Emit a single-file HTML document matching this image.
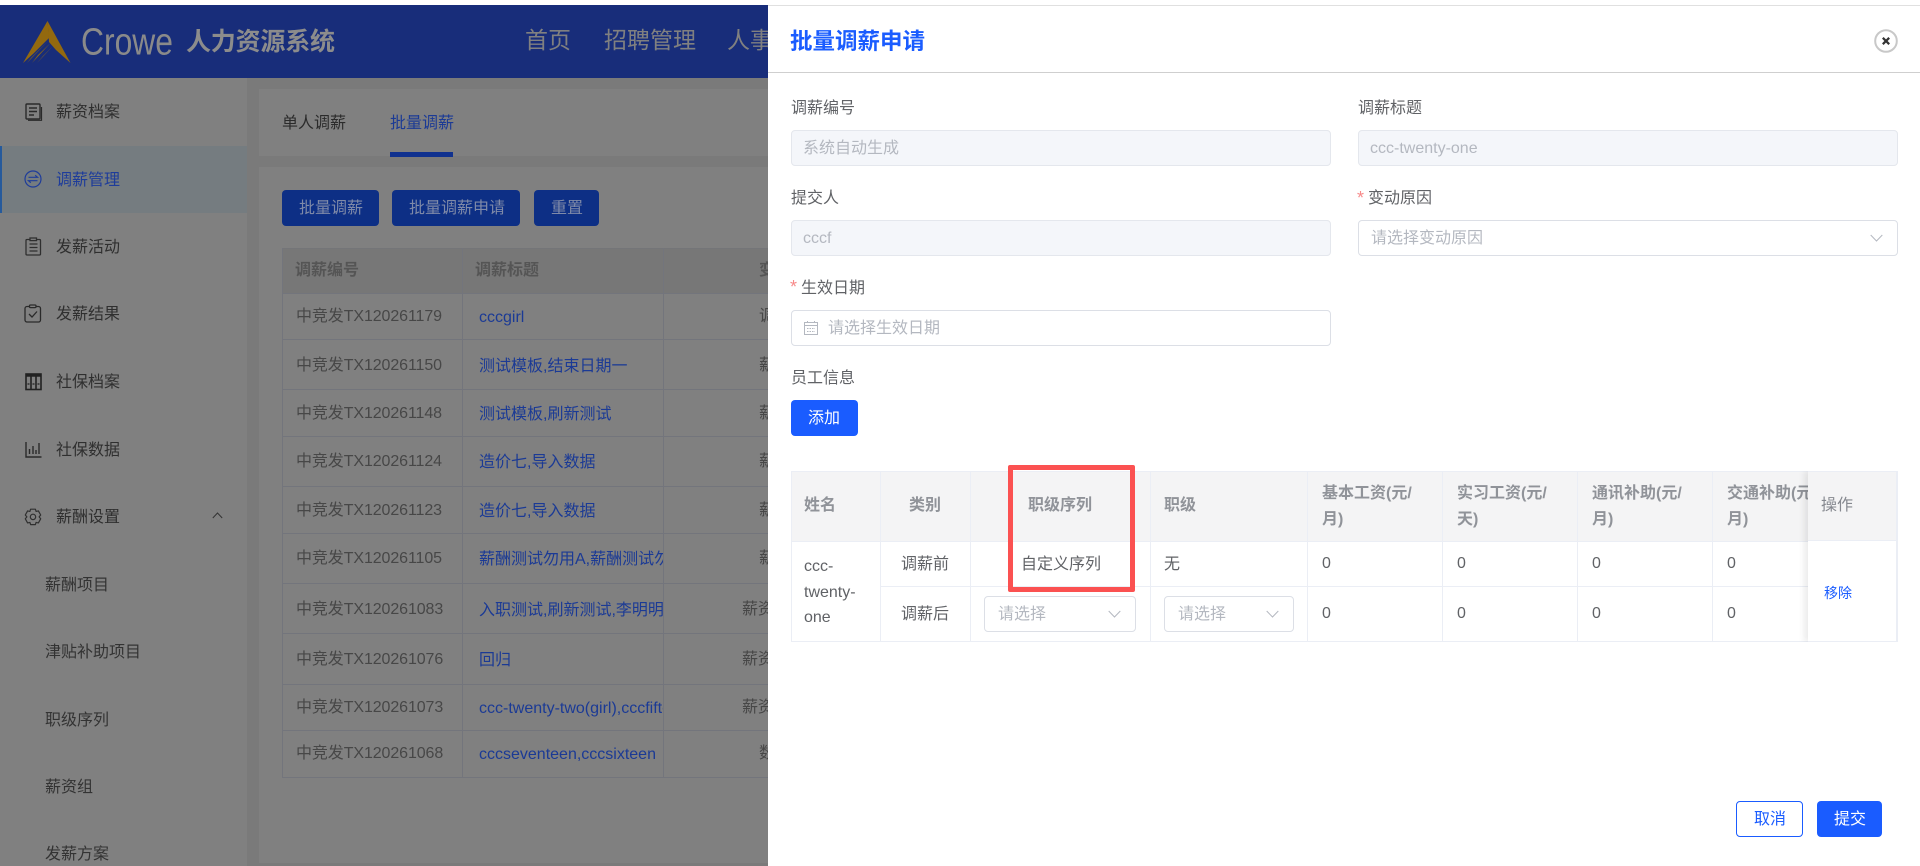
<!DOCTYPE html>
<html lang="zh">
<head>
<meta charset="utf-8">
<title>批量调薪申请</title>
<style>
html,body{margin:0;padding:0;width:1920px;height:866px;overflow:hidden;background:#fff}
body{position:relative;font-family:"Liberation Sans","Noto Sans CJK SC",sans-serif;font-size:16px}
.b{position:absolute;box-sizing:border-box}
.t{position:absolute;white-space:nowrap;line-height:24px;height:24px;margin-top:1px}
.si{color:#2f2f2f;margin-top:2px}
.sub{color:#333;margin-top:2px}
.cell{color:#474747;margin-top:2px;letter-spacing:-.1px}
.lk{color:#1b3a95;overflow:hidden;width:184px;left:479px;margin-top:2px}
.lb{color:#606266;margin-top:2px}
.ph{color:#b4b8c0}
.th{color:#909399;font-weight:bold}
.td{color:#606266}
.star{position:absolute;color:#f78989;font-size:18px;line-height:18px}
svg{position:absolute;display:block;overflow:visible}
.hl{position:absolute;height:1px}
.vl{position:absolute;width:1px}
</style>
</head>
<body>

<!-- page background -->
<div class="b" style="left:0;top:78px;width:768px;height:788px;background:#7a7a7a"></div>

<!-- top header -->
<div class="b" style="left:0;top:5px;width:768px;height:73px;background:#182d7a"></div>
<svg style="left:23px;top:21px" width="48" height="43" viewBox="0 0 48 43">
  <path d="M24.5 0 L47.5 42 L33 29 L26 21 Z" fill="#93690f"/>
  <path d="M24.5 0 L26 17 L10 33 L0 42 Z" fill="#93690f"/>
  <path d="M25 20 L8 37 L4 42 Z M27.500 22 L15 34 L9 42 Z M30 25 L20 35 L14 42 Z" fill="#93690f"/>
</svg>
<svg style="left:81px;top:20px" width="94" height="42" viewBox="0 0 94 42">
  <text x="0" y="34.5" font-family="Liberation Sans" font-size="38" fill="#8a8a8a" textLength="92" lengthAdjust="spacingAndGlyphs">Crowe</text>
</svg>
<div class="t" style="left:186px;top:26px;height:30px;line-height:30px;font-size:25px;font-weight:bold;color:#8c8c8c;letter-spacing:-.2px">人力资源系统</div>
<div class="t" style="left:525px;top:24px;height:30px;line-height:30px;font-size:23px;color:#808080">首页</div>
<div class="t" style="left:604px;top:24px;height:30px;line-height:30px;font-size:23px;color:#808080">招聘管理</div>
<div class="t" style="left:727px;top:24px;height:30px;line-height:30px;font-size:23px;color:#808080">人事</div>

<!-- sidebar -->
<div class="b" style="left:0;top:78px;width:247px;height:788px;background:#808080"></div>
<div class="b" style="left:0;top:146px;width:247px;height:67px;background:#757c80"></div>
<div class="b" style="left:0;top:146px;width:2px;height:67px;background:#265a9c"></div>

<svg style="left:25px;top:103px" width="17" height="18" viewBox="0 0 17 18" fill="none" stroke="#2a2a2a" stroke-width="1.4"><rect x="1" y="1" width="14" height="15" rx="1"/><path d="M4 5h8M4 8.5h8M4 12h5"/><path d="M3 17.3h13.5V4" stroke-width="1.2"/></svg>
<div class="t si" style="left:56px;top:99px">薪资档案</div>

<svg style="left:24px;top:170px" width="18" height="18" viewBox="0 0 18 18" fill="none" stroke="#1e3c9a" stroke-width="1.2"><circle cx="9" cy="9" r="8"/><path d="M4.5 7.3h9l-2.3-2M13.5 10.7h-9l2.3 2"/></svg>
<div class="t" style="left:56px;top:167px;margin-top:2px;color:#1e3c9a">调薪管理</div>

<svg style="left:25px;top:237px" width="17" height="19" viewBox="0 0 17 19" fill="none" stroke="#2f2f2f" stroke-width="1.3"><rect x="1" y="2.5" width="14.5" height="15.5" rx="1"/><rect x="5" y="1" width="6.5" height="2.6" fill="#808080"/><path d="M4.5 7h8M4.5 10.5h8M4.5 14h8"/></svg>
<div class="t si" style="left:56px;top:234px">发薪活动</div>

<svg style="left:24px;top:304px" width="18" height="19" viewBox="0 0 18 19" fill="none" stroke="#2a2a2a" stroke-width="1.3"><rect x="1" y="2.5" width="15.5" height="15.5" rx="2"/><rect x="5.5" y="1" width="6.5" height="2.6" rx="1" fill="#808080"/><path d="M5 10l3 3 5-5.5"/></svg>
<div class="t si" style="left:56px;top:301px">发薪结果</div>

<svg style="left:25px;top:373px" width="17" height="17" viewBox="0 0 17 17" fill="none" stroke="#222" stroke-width="1.6"><rect x="1" y="1" width="15" height="15.5"/><path d="M6 1v15.5M11 1v15.500"/><path d="M1 2.500h15" stroke-width="2.500"/><path d="M2.500 11h2M7.500 11h2M12.500 11h2" stroke-width="1.200"/></svg>
<div class="t si" style="left:56px;top:369px">社保档案</div>

<svg style="left:25px;top:441px" width="17" height="17" viewBox="0 0 17 17" fill="none" stroke="#2a2a2a" stroke-width="1.4"><path d="M1 1v15h15.5"/><path d="M4.5 13V8M8 13V5M11 13V9M14 13V2"/></svg>
<div class="t si" style="left:56px;top:437px">社保数据</div>

<svg style="left:24px;top:508px" width="18" height="18" viewBox="0 0 18 18" fill="none" stroke="#2f2f2f" stroke-width="1.2"><path d="M6.6 1.2h4.8l.7 2.2 2.3-.5 2.3 4.1-1.6 1.9 1.6 1.9-2.3 4.1-2.3-.5-.7 2.2H6.600l-.7-2.200-2.300.500L1.300 10.800l1.600-1.900L1.300 7l2.300-4.100 2.300.500z" stroke-linejoin="round"/><circle cx="9" cy="8.900" r="2.700"/></svg>
<div class="t si" style="left:56px;top:504px">薪酬设置</div>
<svg style="left:212px;top:512px" width="11" height="7" viewBox="0 0 11 7" fill="none" stroke="#333" stroke-width="1"><path d="M.8 6L5.500 1l4.700 5"/></svg>

<div class="t sub" style="left:45px;top:572px">薪酬项目</div>
<div class="t sub" style="left:45px;top:639px">津贴补助项目</div>
<div class="t sub" style="left:45px;top:707px">职级序列</div>
<div class="t sub" style="left:45px;top:774px">薪资组</div>
<div class="t sub" style="left:45px;top:841px">发薪方案</div>

<!-- tabs panel -->
<div class="b" style="left:259px;top:89px;width:509px;height:67px;background:#808080"></div>
<div class="t" style="left:282px;top:110px;margin-top:2px;color:#2b2b2b">单人调薪</div>
<div class="t" style="left:390px;top:110px;margin-top:2px;color:#1b3a95">批量调薪</div>
<div class="b" style="left:390px;top:152px;width:63px;height:5px;background:#10318f"></div>

<!-- main panel -->
<div class="b" style="left:259px;top:167px;width:509px;height:696px;background:#808080"></div>
<div class="b" style="left:282px;top:190px;width:97px;height:36px;background:#0d2f85;border-radius:4px"></div>
<div class="t" style="left:299px;top:196px;color:#7f8aa8">批量调薪</div>
<div class="b" style="left:392px;top:190px;width:128px;height:36px;background:#0d2f85;border-radius:4px"></div>
<div class="t" style="left:409px;top:196px;color:#7f8aa8">批量调薪申请</div>
<div class="b" style="left:534px;top:190px;width:65px;height:36px;background:#0d2f85;border-radius:4px"></div>
<div class="t" style="left:551px;top:196px;color:#7f8aa8">重置</div>

<!-- background table -->
<div class="b" style="left:282px;top:248px;width:486px;height:45px;background:#777"></div>
<div class="hl" style="left:282px;top:248px;width:486px;background:#747578"></div>
<div class="hl" style="left:282px;top:293px;width:486px;background:#73757c"></div>
<div class="hl" style="left:282px;top:339px;width:486px;background:#73757c"></div>
<div class="hl" style="left:282px;top:389px;width:486px;background:#73757c"></div>
<div class="hl" style="left:282px;top:436px;width:486px;background:#73757c"></div>
<div class="hl" style="left:282px;top:486px;width:486px;background:#73757c"></div>
<div class="hl" style="left:282px;top:533px;width:486px;background:#73757c"></div>
<div class="hl" style="left:282px;top:583px;width:486px;background:#73757c"></div>
<div class="hl" style="left:282px;top:633px;width:486px;background:#73757c"></div>
<div class="hl" style="left:282px;top:684px;width:486px;background:#73757c"></div>
<div class="hl" style="left:282px;top:730px;width:486px;background:#73757c"></div>
<div class="hl" style="left:282px;top:777px;width:486px;background:#73757c"></div>
<div class="vl" style="left:282px;top:248px;height:530px;background:#73757c"></div>
<div class="vl" style="left:462px;top:248px;height:530px;background:#73757c"></div>
<div class="vl" style="left:663px;top:248px;height:530px;background:#73757c"></div>

<div class="t" style="left:295px;top:257px;margin-top:2px;color:#555;font-weight:bold">调薪编号</div>
<div class="t" style="left:475px;top:257px;margin-top:2px;color:#555;font-weight:bold">调薪标题</div>
<div class="t" style="left:759px;top:257px;margin-top:2px;color:#555;font-weight:bold">变</div>

<div class="t cell" style="left:296px;top:303px">中竞发TX120261179</div>
<div class="t cell" style="left:296px;top:352px">中竞发TX120261150</div>
<div class="t cell" style="left:296px;top:400px">中竞发TX120261148</div>
<div class="t cell" style="left:296px;top:448px">中竞发TX120261124</div>
<div class="t cell" style="left:296px;top:497px">中竞发TX120261123</div>
<div class="t cell" style="left:296px;top:545px">中竞发TX120261105</div>
<div class="t cell" style="left:296px;top:596px">中竞发TX120261083</div>
<div class="t cell" style="left:296px;top:646px">中竞发TX120261076</div>
<div class="t cell" style="left:296px;top:694px">中竞发TX120261073</div>
<div class="t cell" style="left:296px;top:740px">中竞发TX120261068</div>

<div class="t lk" style="top:304px">cccgirl</div>
<div class="t lk" style="top:353px">测试模板,结束日期一</div>
<div class="t lk" style="top:401px">测试模板,刷新测试</div>
<div class="t lk" style="top:449px">造价七,导入数据</div>
<div class="t lk" style="top:498px">造价七,导入数据</div>
<div class="t lk" style="top:546px">薪酬测试勿用A,薪酬测试勿用B</div>
<div class="t lk" style="top:597px">入职测试,刷新测试,李明明,测试</div>
<div class="t lk" style="top:647px">回归</div>
<div class="t lk" style="top:695px">ccc-twenty-two(girl),cccfifteen</div>
<div class="t lk" style="top:741px">cccseventeen,cccsixteen</div>

<div class="t cell" style="left:759px;top:303px">调</div>
<div class="t cell" style="left:759px;top:352px">薪</div>
<div class="t cell" style="left:759px;top:400px">薪</div>
<div class="t cell" style="left:759px;top:448px">薪</div>
<div class="t cell" style="left:759px;top:497px">薪</div>
<div class="t cell" style="left:759px;top:545px">薪</div>
<div class="t cell" style="left:742px;top:596px">薪资</div>
<div class="t cell" style="left:742px;top:646px">薪资</div>
<div class="t cell" style="left:742px;top:694px">薪资</div>
<div class="t cell" style="left:759px;top:740px">数</div>

<!-- drawer -->
<div class="b" style="left:768px;top:5px;width:1152px;height:861px;background:#fff;border-top:1px solid #e0e0e0;overflow:hidden"></div>
<div class="hl" style="left:768px;top:72px;width:1152px;background:#cfcfcf"></div>
<div class="t" style="left:790px;top:26px;height:30px;line-height:30px;font-size:22.500px;font-weight:bold;color:#1a5cff">批量调薪申请</div>
<svg style="left:1874px;top:29px" width="24" height="24" viewBox="0 0 24 24" fill="none"><circle cx="12" cy="12" r="10.800" stroke="#c8c8c8" stroke-width="2"/><path d="M8.800 8.800l6.400 6.400M15.200 8.800l-6.400 6.400" stroke="#333" stroke-width="2.200"/></svg>

<!-- form -->
<div class="t lb" style="left:791px;top:95px">调薪编号</div>
<div class="b" style="left:791px;top:130px;width:540px;height:36px;background:#f4f6fa;border:1px solid #e4e7ed;border-radius:4px"></div>
<div class="t ph" style="left:803px;top:136px">系统自动生成</div>

<div class="t lb" style="left:1358px;top:95px">调薪标题</div>
<div class="b" style="left:1358px;top:130px;width:540px;height:36px;background:#f4f6fa;border:1px solid #e4e7ed;border-radius:4px"></div>
<div class="t ph" style="left:1370px;top:136px">ccc-twenty-one</div>

<div class="t lb" style="left:791px;top:185px">提交人</div>
<div class="b" style="left:791px;top:220px;width:540px;height:36px;background:#f4f6fa;border:1px solid #e4e7ed;border-radius:4px"></div>
<div class="t ph" style="left:803px;top:226px">cccf</div>

<div class="star" style="left:1357px;top:189px">*</div>
<div class="t lb" style="left:1368px;top:185px">变动原因</div>
<div class="b" style="left:1358px;top:220px;width:540px;height:36px;background:#fff;border:1px solid #dcdfe6;border-radius:4px"></div>
<div class="t ph" style="left:1371px;top:226px">请选择变动原因</div>
<svg style="left:1870px;top:234px" width="13" height="8" viewBox="0 0 13 8" fill="none" stroke="#b4b8c0" stroke-width="1"><path d="M.7 1l5.800 6 5.800-6"/></svg>

<div class="star" style="left:790px;top:278px">*</div>
<div class="t lb" style="left:801px;top:275px">生效日期</div>
<div class="b" style="left:791px;top:310px;width:540px;height:36px;background:#fff;border:1px solid #dcdfe6;border-radius:4px"></div>
<svg style="left:804px;top:321px" width="14" height="14" viewBox="0 0 14 14" fill="none" stroke="#b4b8c0" stroke-width="1"><rect x=".5" y="1.500" width="13" height="12"/><path d="M.5 4.500h13M3.500 0v2M10.500 0v2"/><path d="M3 7.500h8M3 10.500h8" stroke-dasharray="1.500 1"/></svg>
<div class="t ph" style="left:828px;top:316px">请选择生效日期</div>

<div class="t lb" style="left:791px;top:365px">员工信息</div>
<div class="b" style="left:791px;top:400px;width:67px;height:36px;background:#1a5cff;border-radius:4px"></div>
<div class="t" style="left:808px;top:406px;color:#fff">添加</div>

<!-- drawer table -->
<div class="b" style="left:791px;top:471px;width:1107px;height:70px;background:#f4f4f5"></div>
<div class="hl" style="left:791px;top:471px;width:1107px;background:#ebeef5"></div>
<div class="hl" style="left:791px;top:541px;width:1107px;background:#ebeef5"></div>
<div class="hl" style="left:880px;top:586px;width:928px;background:#ebeef5"></div>
<div class="hl" style="left:791px;top:641px;width:1107px;height:1px;background:#ebeef5"></div>
<div class="vl" style="left:791px;top:471px;height:171px;background:#ebeef5"></div>
<div class="vl" style="left:880px;top:471px;height:171px;background:#ebeef5"></div>
<div class="vl" style="left:970px;top:471px;height:171px;background:#ebeef5"></div>
<div class="vl" style="left:1150px;top:471px;height:171px;background:#ebeef5"></div>
<div class="vl" style="left:1307px;top:471px;height:171px;background:#ebeef5"></div>
<div class="vl" style="left:1442px;top:471px;height:171px;background:#ebeef5"></div>
<div class="vl" style="left:1577px;top:471px;height:171px;background:#ebeef5"></div>
<div class="vl" style="left:1712px;top:471px;height:171px;background:#ebeef5"></div>

<div class="t th" style="left:804px;top:493px">姓名</div>
<div class="t th" style="left:909px;top:493px">类别</div>
<div class="t th" style="left:1028px;top:493px">职级序列</div>
<div class="t th" style="left:1164px;top:493px">职级</div>
<div class="t th" style="left:1322px;top:481px">基本工资(元/</div>
<div class="t th" style="left:1322px;top:507px">月)</div>
<div class="t th" style="left:1457px;top:481px">实习工资(元/</div>
<div class="t th" style="left:1457px;top:507px">天)</div>
<div class="t th" style="left:1592px;top:481px">通讯补助(元/</div>
<div class="t th" style="left:1592px;top:507px">月)</div>
<div class="t th" style="left:1727px;top:481px">交通补助(元/</div>
<div class="t th" style="left:1727px;top:507px">月)</div>

<div class="t td" style="left:804px;top:554px">ccc-</div>
<div class="t td" style="left:804px;top:580px">twenty-</div>
<div class="t td" style="left:804px;top:605px">one</div>
<div class="t td" style="left:901px;top:552px">调薪前</div>
<div class="t td" style="left:901px;top:602px">调薪后</div>
<div class="t td" style="left:1021px;top:552px">自定义序列</div>
<div class="t td" style="left:1164px;top:552px">无</div>
<div class="t td" style="left:1322px;top:551px">0</div>
<div class="t td" style="left:1322px;top:601px">0</div>
<div class="t td" style="left:1457px;top:551px">0</div>
<div class="t td" style="left:1457px;top:601px">0</div>
<div class="t td" style="left:1592px;top:551px">0</div>
<div class="t td" style="left:1592px;top:601px">0</div>
<div class="t td" style="left:1727px;top:551px">0</div>
<div class="t td" style="left:1727px;top:601px">0</div>

<div class="b" style="left:984px;top:596px;width:152px;height:36px;background:#fff;border:1px solid #dcdfe6;border-radius:4px"></div>
<div class="t ph" style="left:998px;top:602px">请选择</div>
<svg style="left:1108px;top:610px" width="13" height="8" viewBox="0 0 13 8" fill="none" stroke="#b4b8c0" stroke-width="1"><path d="M.7 1l5.800 6 5.800-6"/></svg>
<div class="b" style="left:1164px;top:596px;width:130px;height:36px;background:#fff;border:1px solid #dcdfe6;border-radius:4px"></div>
<div class="t ph" style="left:1178px;top:602px">请选择</div>
<svg style="left:1266px;top:610px" width="13" height="8" viewBox="0 0 13 8" fill="none" stroke="#b4b8c0" stroke-width="1"><path d="M.7 1l5.800 6 5.800-6"/></svg>

<!-- fixed column -->
<div class="b" style="left:1808px;top:471px;width:90px;height:171px;background:#fff;box-shadow:-4px 0 6px rgba(0,0,0,.08);clip-path:inset(0 0 0 -10px);border-top:1px solid #ebeef5;border-right:2px solid #ebeef5;border-bottom:1px solid #ebeef5"></div>
<div class="b" style="left:1808px;top:472px;width:88px;height:69px;background:#f4f4f5;border-bottom:1px solid #ebeef5"></div>
<div class="t" style="left:1821px;top:493px;color:#85888f">操作</div>
<div class="t" style="left:1824px;top:580px;font-size:14px;color:#1a5cff">移除</div>

<!-- red highlight -->
<div class="b" style="left:1008px;top:465px;width:127px;height:127px;border:5px solid #fb5151;border-radius:2px"></div>

<!-- footer buttons -->
<div class="b" style="left:1736px;top:801px;width:67px;height:36px;background:#fff;border:1px solid #1a5cff;border-radius:4px"></div>
<div class="t" style="left:1754px;top:807px;color:#1a5cff">取消</div>
<div class="b" style="left:1817px;top:801px;width:65px;height:36px;background:#1a5cff;border-radius:4px"></div>
<div class="t" style="left:1834px;top:807px;color:#fff">提交</div>

</body>
</html>
